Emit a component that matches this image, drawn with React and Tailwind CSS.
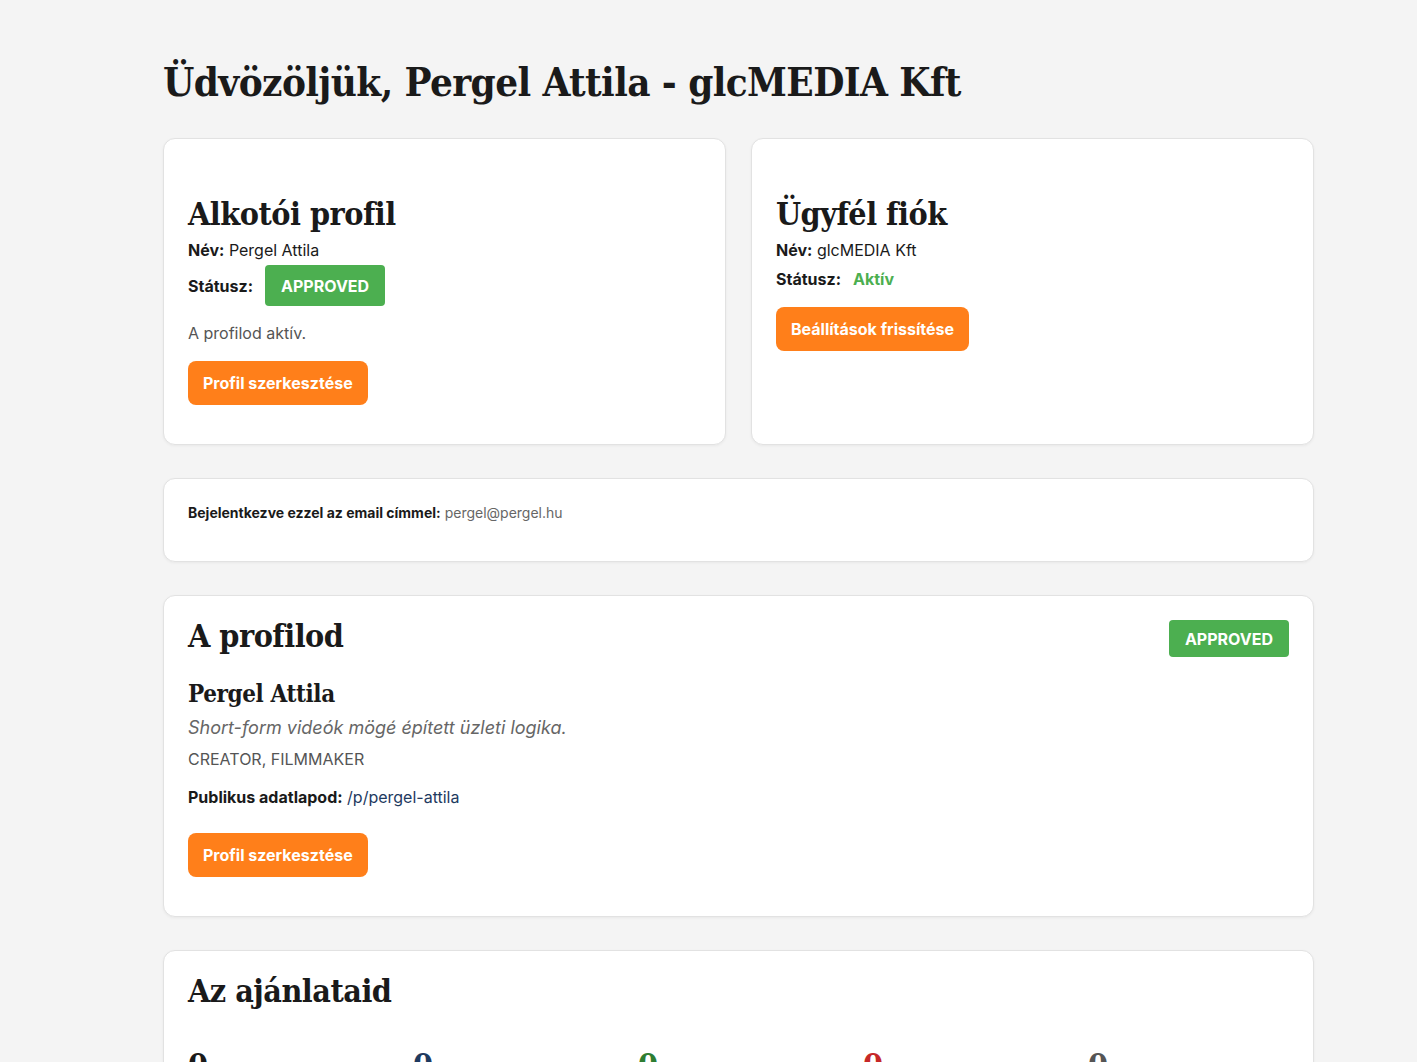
import React from 'react';

const serif = "font-['DejaVu_Serif_Condensed','DejaVu_Serif',Georgia,serif] font-stretch-condensed";

const Badge = ({ children, className = '' }) => (
  <span className={`inline-flex items-center rounded bg-[#4caf50] font-bold text-white uppercase ${className}`}>
    {children}
  </span>
);

const OrangeButton = ({ children }) => (
  <button className="rounded-lg bg-[#ff7f1a] px-[15px] h-[44px] text-base font-bold text-white">
    {children}
  </button>
);

const Card = ({ children, className = '' }) => (
  <div className={`rounded-xl border border-[#e2e2e2] bg-white shadow-[0_1px_3px_rgba(0,0,0,0.05)] ${className}`}>
    {children}
  </div>
);

const stats = [
  { value: 0, label: 'Összes ajánlat', color: 'text-[#1a1a1a]' },
  { value: 0, label: 'Függőben', color: 'text-[#1e3a5f]' },
  { value: 0, label: 'Elfogadva', color: 'text-[#2e7d32]' },
  { value: 0, label: 'Elutasítva', color: 'text-[#c62828]' },
  { value: 0, label: 'Lejárt', color: 'text-[#555555]' },
];

export default function App() {
  return (
    <div className="min-h-screen bg-[#f4f4f4] font-['Inter',sans-serif] text-[#1a1a1a]">
      <div className="ml-[163px] w-[1151px] pt-[58px] pb-10">
        <h1 className={`${serif} text-[40px] leading-[48px] font-bold tracking-[-0.6px] mb-[32px]`}>
          Üdvözöljük, Pergel Attila - glcMEDIA Kft
        </h1>

        <div className="grid grid-cols-2 gap-[25px]">
          <Card className="px-6 pt-6 pb-[39px]">
            <h2 className={`${serif} mt-[35px] text-[32px] leading-[32px] font-bold tracking-[-0.5px]`}>Alkotói profil</h2>
            <p className="mt-[8px] leading-6"><strong>Név:</strong> Pergel Attila</p>
            <div className="mt-[3px] flex items-center gap-[12px]">
              <strong>Státusz:</strong>
              <Badge className="h-[41px] px-4 text-base">Approved</Badge>
            </div>
            <p className="mt-[15px] leading-6 text-[#555555]">A profilod aktív.</p>
            <div className="mt-4">
              <OrangeButton>Profil szerkesztése</OrangeButton>
            </div>
          </Card>

          <Card className="px-6 pt-6 pb-[39px]">
            <h2 className={`${serif} mt-[35px] text-[32px] leading-[32px] font-bold tracking-[-0.5px]`}>Ügyfél fiók</h2>
            <p className="mt-[8px] leading-6"><strong>Név:</strong> glcMEDIA Kft</p>
            <p className="mt-[5px] leading-6">
              <strong>Státusz:</strong>
              <span className="ml-[12px] font-bold text-[#4caf50]">Aktív</span>
            </p>
            <div className="mt-4">
              <OrangeButton>Beállítások frissítése</OrangeButton>
            </div>
          </Card>
        </div>

        <Card className="mt-[33px] px-6 pt-6 pb-[38px]">
          <p className="text-sm leading-5">
            <strong>Bejelentkezve ezzel az email címmel:</strong>{' '}
            <span className="text-[#666666]">pergel@pergel.hu</span>
          </p>
        </Card>

        <Card className="mt-[33px] px-6 pt-6 pb-[39px]">
          <div className="flex items-start justify-between">
            <h2 className={`${serif} text-[32px] leading-[32px] font-bold tracking-[-0.5px]`}>A profilod</h2>
            <Badge className="h-[37px] px-4 text-base">Approved</Badge>
          </div>
          <h3 className={`${serif} mt-[21px] text-[24px] leading-[32px] font-bold tracking-[-0.4px]`}>Pergel Attila</h3>
          <p className="mt-[4px] text-lg italic leading-7 text-[#666666]">
            Short-form videók mögé épített üzleti logika.
          </p>
          <p className="mt-[5px] leading-6 text-[#555555]">CREATOR, FILMMAKER</p>
          <p className="mt-[14px] leading-6">
            <strong>Publikus adatlapod:</strong>{' '}
            <a href="#" className="text-[#1e3a5f]">/p/pergel-attila</a>
          </p>
          <div className="mt-[24px]">
            <OrangeButton>Profil szerkesztése</OrangeButton>
          </div>
        </Card>

        <Card className="mt-[33px] px-6 pt-6 pb-10">
          <h2 className={`${serif} text-[32px] leading-[32px] font-bold tracking-[-0.5px]`}>Az ajánlataid</h2>
          <div className="mt-[38px] grid grid-cols-5 gap-6">
            {stats.map((s) => (
              <div key={s.label}>
                <div className={`${serif} text-[32px] leading-[40px] font-bold ${s.color}`}>{s.value}</div>
                <div className="mt-1 text-sm text-[#666666]">{s.label}</div>
              </div>
            ))}
          </div>
        </Card>
      </div>
    </div>
  );
}
